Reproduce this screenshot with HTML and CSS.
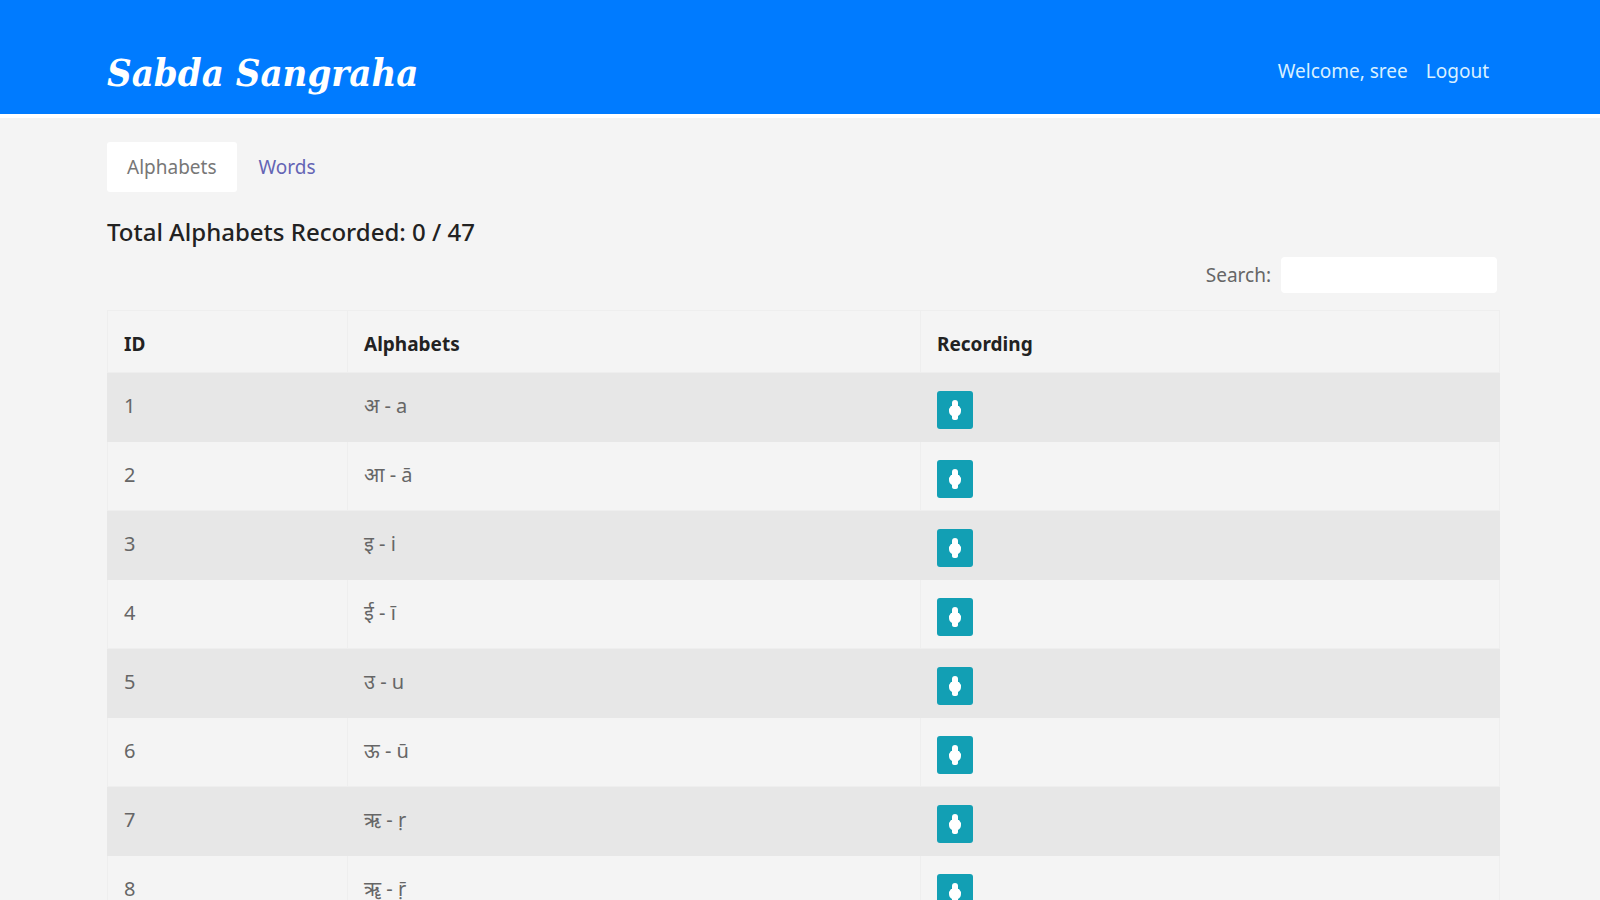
FILE: index.html
```html
<!DOCTYPE html>
<html lang="en">
<head>
<meta charset="UTF-8">
<meta name="viewport" content="width=device-width, initial-scale=1.0">
<title>Sabda Sangraha</title>
<link rel="stylesheet" href="styles.css">
</head>
<body>

<!-- Shared microphone icon -->
<svg class="sprite" aria-hidden="true">
    <symbol id="mic" viewBox="0 0 14 20">
        <rect x="4" y="0" width="6" height="14" rx="3"/>
        <path d="M3 6L1 9v2c0 2 1 4 3 5v2c0 1 1 2 2 2h2c1 0 2-1 2-2v-2c2-1 3-3 3-5V9l-2-3z"/>
    </symbol>
</svg>

<header class="header">
    <div class="container header-inner">
        <h1 class="brand">Sabda Sangraha</h1>
        <nav class="user-nav">
            <span>Welcome, sree</span>
            <a href="#">Logout</a>
        </nav>
    </div>
</header>

<main class="container">
    <nav class="tabs">
        <a class="tab active" href="#alphabets">Alphabets</a>
        <a class="tab" href="#words">Words</a>
    </nav>

    <h2 class="total">Total Alphabets Recorded: 0 / 47</h2>

    <div class="search">
        <label for="search">Search:</label>
        <input type="search" id="search">
    </div>

    <table class="table">
        <thead>
            <tr>
                <th class="col-id">ID</th>
                <th class="col-letter">Alphabets</th>
                <th>Recording</th>
            </tr>
        </thead>
        <tbody>
            <tr>
                <td>1</td>
                <td>अ - a</td>
                <td><button class="record" aria-label="Record a"><svg><use href="#mic"/></svg></button></td>
            </tr>
            <tr>
                <td>2</td>
                <td>आ - ā</td>
                <td><button class="record" aria-label="Record ā"><svg><use href="#mic"/></svg></button></td>
            </tr>
            <tr>
                <td>3</td>
                <td>इ - i</td>
                <td><button class="record" aria-label="Record i"><svg><use href="#mic"/></svg></button></td>
            </tr>
            <tr>
                <td>4</td>
                <td>ई - ī</td>
                <td><button class="record" aria-label="Record ī"><svg><use href="#mic"/></svg></button></td>
            </tr>
            <tr>
                <td>5</td>
                <td>उ - u</td>
                <td><button class="record" aria-label="Record u"><svg><use href="#mic"/></svg></button></td>
            </tr>
            <tr>
                <td>6</td>
                <td>ऊ - ū</td>
                <td><button class="record" aria-label="Record ū"><svg><use href="#mic"/></svg></button></td>
            </tr>
            <tr>
                <td>7</td>
                <td>ऋ - ṛ</td>
                <td><button class="record" aria-label="Record ṛ"><svg><use href="#mic"/></svg></button></td>
            </tr>
            <tr>
                <td>8</td>
                <td>ॠ - ṝ</td>
                <td><button class="record" aria-label="Record ṝ"><svg><use href="#mic"/></svg></button></td>
            </tr>
        </tbody>
    </table>
</main>

</body>
</html>
```
FILE: styles.css
```css
* {
    box-sizing: border-box;
}
body {
    margin: 0;
    background-color: #f4f4f4;
    color: #666;
    font-family: "Noto Sans", "Open Sans", sans-serif;
    font-size: 19px;
    line-height: 28px;
    overflow-x: hidden;
}
.sprite {
    display: none;
}
.container {
    padding: 0 100px 0 107px;
}

/* Header */
.header {
    background-color: #007bff;
    border-bottom: 4px solid #fff;
    padding: 45px 0 13px;
}
.header-inner {
    display: flex;
    justify-content: space-between;
    align-items: center;
}
.brand {
    margin: 0;
    color: #fff;
    font-family: "DejaVu Serif Condensed", "DejaVu Serif", serif;
    font-size: 38px;
    font-style: italic;
    font-weight: bold;
    line-height: 56px;
}
.user-nav {
    display: flex;
    gap: 18px;
    padding: 0 11px 4px 0;
    color: #d9f0ff;
}
.user-nav a {
    color: inherit;
    text-decoration: none;
}

/* Tabs */
.tabs {
    display: flex;
    gap: 2px;
    padding: 24px 0 23px;
}
.tab {
    padding: 11px 20px;
    border-radius: 3px;
    color: #6464b4;
    text-decoration: none;
}
.tab.active {
    background-color: #fff;
    color: #777;
}
.total {
    margin: 0;
    color: #222;
    font-size: 24px;
    font-weight: 500;
    line-height: 34px;
}

/* Search */
.search {
    display: flex;
    justify-content: flex-end;
    align-items: center;
    gap: 10px;
    padding: 8px 3px 17px 0;
}
.search input {
    width: 216px;
    height: 36px;
    padding: 4px 8px;
    border: 0;
    border-radius: 4px;
    background-color: #fff;
    font: inherit;
}

/* Table */
.table {
    width: 100%;
    table-layout: fixed;
    border-collapse: collapse;
    border: 1px solid #eee;
}
.table th,
.table td {
    padding: 18px 16px 12px;
    border: 1px solid #eee;
    text-align: left;
    vertical-align: top;
}
.table td {
    font-size: 20px;
    line-height: 30px;
}
.table th {
    padding: 19px 16px 14px;
    color: #222;
    font-weight: bold;
}
.table tbody tr:nth-child(odd) {
    background-color: #e7e7e7;
}
.table tbody tr:nth-child(odd) td {
    border-color: #e7e7e7;
}
.col-id {
    width: 240px;
}
.col-letter {
    width: 573px;
}
.record {
    display: flex;
    justify-content: center;
    align-items: center;
    width: 36px;
    height: 38px;
    padding: 0;
    border: 0;
    border-radius: 3px;
    background-color: #129fb4;
    cursor: pointer;
}
.record svg {
    width: 14px;
    height: 20px;
    fill: #fff;
}
```
